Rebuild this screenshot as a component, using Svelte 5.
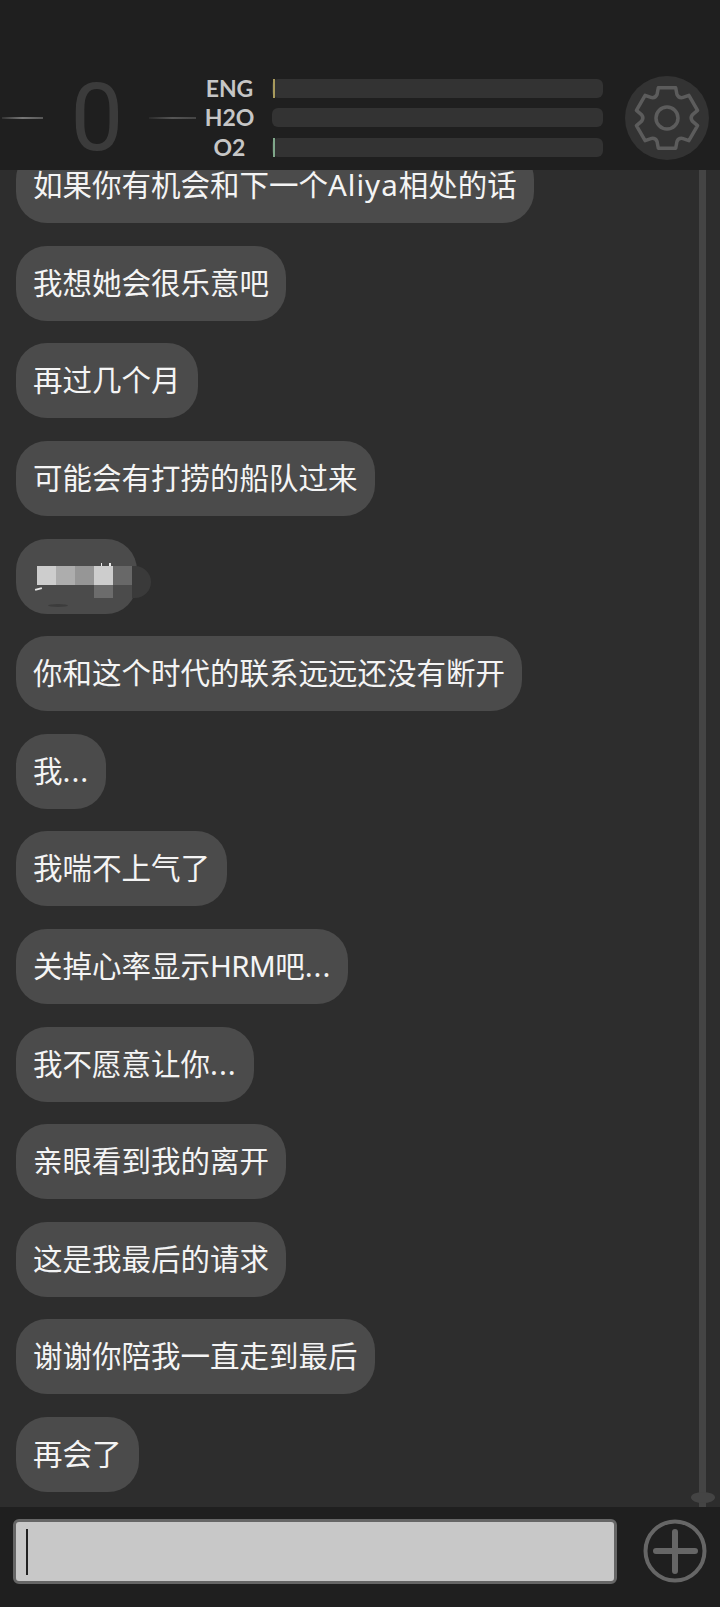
<script lang="ts">
  const messages = [
    '如果你有机会和下一个Aliya相处的话',
    '我想她会很乐意吧',
    '再过几个月',
    '可能会有打捞的船队过来',
    null,
    '你和这个时代的联系远远还没有断开',
    '我...',
    '我喘不上气了',
    '关掉心率显示HRM吧...',
    '我不愿意让你...',
    '亲眼看到我的离开',
    '这是我最后的请求',
    '谢谢你陪我一直走到最后',
    '再会了',
  ]

  const gauges = [
    { label: 'ENG', color: '#a89a5c' },
    { label: 'H2O', color: 'transparent' },
    { label: 'O2', color: '#7fa78a' },
  ]

  const mosaic = ['#cdcdcd', '#adadad', '#969696', '#cdcdcd', '#686868']

  // latin runs are set a little wider or tighter than the font's defaults
  function runs(text: string): string[] {
    return text.split(/(Aliya|HRM|\.\.\.)/).filter(Boolean)
  }

  function runClass(run: string): string {
    if (run === 'HRM') return 'tight'
    if (run === 'Aliya' || run === '...') return 'wide'
    return ''
  }

  // six-toothed gear outline, centred on 36,36
  function gearPath(R: number, r: number): string {
    const pt = (rad: number, deg: number) => {
      const a = (deg * Math.PI) / 180
      return `${(36 + rad * Math.cos(a)).toFixed(2)} ${(36 + rad * Math.sin(a)).toFixed(2)}`
    }
    let d = ''
    for (let i = 0; i < 6; i++) {
      const a = i * 60 - 90
      d += `${i === 0 ? 'M' : 'L'}${pt(r, a - 23)}L${pt(R, a - 16)}L${pt(R, a + 16)}L${pt(r, a + 23)}`
      d += `Q${pt(r - 2.5, a + 30)} ${pt(r, a + 37)}`
    }
    return d + 'Z'
  }
</script>

<div class="screen">
  <header>
    <div class="counter">
      <span class="line"></span>
      <span class="zero">0</span>
      <span class="line right"></span>
    </div>
    <div class="gauges">
      {#each gauges as g}
        <div class="gauge">
          <span class="label">{g.label}</span>
          <span class="bar"><span class="fill" style="background: {g.color}"></span></span>
        </div>
      {/each}
    </div>
    <button class="settings" aria-label="settings">
      <svg viewBox="0 0 72 72" width="72" height="72" fill="none" stroke="#5c5c5c" stroke-width="3.5" stroke-linejoin="round">
        <path d={gearPath(31.5, 25.5)} />
        <circle cx="36" cy="36" r="11" />
      </svg>
    </button>
  </header>

  <main>
    <div class="messages">
      {#each messages as text}
        {#if text}
          <div class="bubble">
            {#each runs(text) as run}<span class={runClass(run)}>{run}</span>{/each}
          </div>
        {:else}
          <div class="bubble hidden-text">
            <span class="tail"></span>
            <div class="mosaic">
              {#each mosaic as c}
                <span style="background: {c}"></span>
              {/each}
            </div>
            <span class="mark dash"></span>
            <span class="mark tick"></span>
            <span class="mark tick second"></span>
            <span class="smudge"></span>
            <span class="fold"></span>
          </div>
        {/if}
      {/each}
    </div>
    <div class="scrolltrack"><span class="knob"></span></div>
  </main>

  <footer>
    <div class="input"><span class="caret"></span></div>
    <button class="add" aria-label="add">
      <svg viewBox="0 0 64 64" width="64" height="64" fill="none" stroke="#666" stroke-linecap="round">
        <circle cx="32" cy="32" r="29.5" stroke-width="4" />
        <path d="M32 13v39M13 32h39" stroke-width="6" />
      </svg>
    </button>
  </footer>
</div>

<style>
  :global(body) {
    margin: 0;
    background: #2d2d2d;
  }
  .screen {
    width: 720px;
    height: 1607px;
    display: flex;
    flex-direction: column;
    overflow: hidden;
    font-family: 'Noto Sans', 'Noto Sans CJK SC', sans-serif;
  }
  header {
    height: 170px;
    flex: none;
    background: #1f1f1f;
    display: flex;
    align-items: flex-start;
    padding-top: 76px;
    box-sizing: border-box;
    position: relative;
    z-index: 2;
  }
  .counter {
    width: 194px;
    margin-left: 2px;
    display: flex;
    align-items: center;
    justify-content: space-between;
    height: 84px;
  }
  .line {
    width: 41px;
    height: 2px;
    background: linear-gradient(90deg, #333, #777 50%, #555);
  }
  .line.right {
    width: 47px;
    background: linear-gradient(90deg, #2a2a2a, #555 50%, #444);
  }
  .zero {
    font-family: 'Roboto', sans-serif;
    font-weight: 400;
    font-size: 94px;
    line-height: 84px;
    margin-left: 2px;
    color: #3b3b3b;
  }
  .gauges {
    width: 413px;
    margin-left: -6px;
    display: flex;
    flex-direction: column;
    gap: 10px;
    padding-top: 3px;
  }
  .gauge {
    display: flex;
    align-items: center;
    height: 19.3px;
  }
  .label {
    width: 79px;
    margin-right: 3px;
    text-align: center;
    font-family: 'Lato', sans-serif;
    font-weight: 700;
    font-size: 23px;
    line-height: 19px;
    color: #c6c6c6;
  }
  .bar {
    width: 331px;
    height: 19px;
    border-radius: 6px;
    background: #333;
  }
  .fill {
    display: block;
    width: 2px;
    height: 100%;
    margin-left: 1px;
  }
  .settings {
    width: 84px;
    height: 84px;
    margin-left: 22px;
    padding: 6px;
    border: 0;
    border-radius: 50%;
    background: #333;
    box-sizing: border-box;
  }
  .settings svg {
    display: block;
  }
  main {
    flex: 1;
    min-height: 0;
    display: flex;
    position: relative;
    background: #2d2d2d;
  }
  .messages {
    flex: 1;
    display: flex;
    flex-direction: column;
    justify-content: flex-end;
    align-items: flex-start;
    gap: 22.6px;
    padding: 0 0 15px 16px;
    overflow: hidden;
  }
  .bubble {
    flex: none;
    height: 75px;
    box-sizing: border-box;
    padding: 0 17px;
    border-radius: 31px;
    background: #4b4b4b;
    color: #f4f4f4;
    font-size: 29.5px;
    line-height: 73px;
    white-space: nowrap;
  }
  .wide {
    letter-spacing: 1px;
  }
  .tight {
    letter-spacing: -0.6px;
  }
  .hidden-text {
    width: 121px;
    position: relative;
    padding: 0;
  }
  .mosaic {
    position: absolute;
    left: 21px;
    top: 27px;
    display: flex;
  }
  .mosaic span {
    width: 19px;
    height: 19px;
  }
  .mark {
    position: absolute;
    background: #e8e8e8;
  }
  .dash {
    left: 19px;
    top: 49px;
    width: 7px;
    height: 2px;
    transform: rotate(-15deg);
  }
  .tick {
    left: 85px;
    top: 24px;
    width: 1px;
    height: 3px;
  }
  .tick.second {
    left: 93px;
    width: 2px;
  }
  .fold {
    position: absolute;
    left: 78px;
    top: 46px;
    width: 19px;
    height: 13px;
    background: #6c6c6c;
  }
  .smudge {
    position: absolute;
    left: 32px;
    top: 65px;
    width: 20px;
    height: 3px;
    border-radius: 50%;
    background: #3c3c3c;
  }
  .tail {
    position: absolute;
    left: 116px;
    top: 27px;
    width: 19px;
    height: 32px;
    border-radius: 0 16px 16px 0;
    background: #3a3a3a;
  }
  .scrolltrack {
    position: absolute;
    left: 699px;
    top: 0;
    bottom: 0;
    width: 7px;
    background: #444;
  }
  .knob {
    position: absolute;
    left: -8px;
    bottom: 4px;
    width: 24px;
    height: 11px;
    border-radius: 50%;
    background: #444;
  }
  footer {
    height: 100px;
    flex: none;
    background: #1f1f1f;
    display: flex;
    align-items: flex-start;
    padding: 12px 0 0 13px;
    box-sizing: border-box;
  }
  .input {
    width: 604px;
    height: 65px;
    box-sizing: border-box;
    border: 3px solid #666;
    border-radius: 6px;
    background: #c8c8c8;
    padding: 7px 0 0 10px;
  }
  .caret {
    display: block;
    width: 2px;
    height: 46px;
    background: #222;
  }
  .add {
    width: 64px;
    height: 64px;
    margin-left: 26px;
    padding: 0;
    border: 0;
    background: none;
  }
  .add svg {
    display: block;
  }
</style>
